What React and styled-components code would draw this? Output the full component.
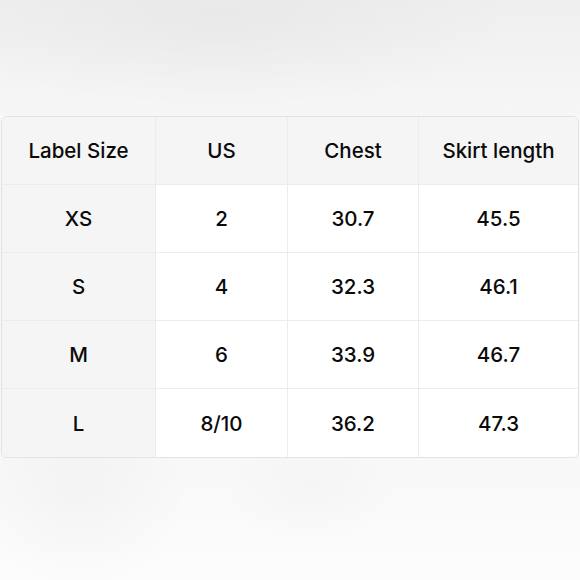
import React from 'react';
import styled, { createGlobalStyle } from 'styled-components';

const GlobalStyle = createGlobalStyle`
  html, body {
    margin: 0;
    padding: 0;
  }
  body {
    font-family: Inter, "Noto Sans", "Liberation Sans", sans-serif;
    color: #111;
  }
`;

const headers = ['Label Size', 'US', 'Chest', 'Skirt length'];

const rows = [
  ['XS', '2', '30.7', '45.5'],
  ['S', '4', '32.3', '46.1'],
  ['M', '6', '33.9', '46.7'],
  ['L', '8/10', '36.2', '47.3'],
];

const App = () => {
  return (
    <Page>
      <GlobalStyle />
      <Top />
      <Table>
        {headers.map((h, i) => (
          <Cell key={h} $shaded $first={i === 0}>
            {h}
          </Cell>
        ))}
        {rows.map((row, r) =>
          row.map((value, c) => (
            <Cell key={`${r}-${c}`} $shaded={c === 0} $first={c === 0} $last={r === rows.length - 1}>
              {value}
            </Cell>
          ))
        )}
      </Table>
      <Bottom />
    </Page>
  );
};

const Page = styled.div`
  width: 580px;
  height: 580px;
  display: flex;
  flex-direction: column;
  overflow: hidden;
  background: #f9f9f9;
`;

const Top = styled.div`
  height: 116px;
  flex-shrink: 0;
  background:
    radial-gradient(ellipse 300px 90px at 220px 20px, rgba(0, 0, 0, 0.03), transparent),
    linear-gradient(180deg, #efefef 0%, #f6f6f6 100%);
`;

const Bottom = styled.div`
  flex: 1;
  background:
    radial-gradient(circle 110px at 80px 30px, rgba(0, 0, 0, 0.025), transparent),
    radial-gradient(ellipse 90px 60px at 310px 30px, rgba(0, 0, 0, 0.015), transparent),
    linear-gradient(180deg, #f8f8f8 0%, #fcfcfc 100%);
`;

const Table = styled.div`
  margin: 0 1px;
  display: grid;
  grid-template-columns: 153px 132px 131px 1fr;
  grid-auto-rows: 68px;
  border: 1px solid #e3e3e3;
  border-radius: 6px;
  overflow: hidden;
  background: #fff;
  box-shadow: 0 1px 2px rgba(0, 0, 0, 0.04);
`;

const Cell = styled.div`
  display: flex;
  align-items: center;
  justify-content: center;
  font-size: 20.5px;
  font-weight: 550;
  letter-spacing: 0;
  color: #0a0a0a;
  background: ${(p) => (p.$shaded ? '#f5f5f5' : '#ffffff')};
  border-left: ${(p) => (p.$first ? 'none' : '1px solid #ececec')};
  border-bottom: ${(p) => (p.$last ? 'none' : '1px solid #ececec')};
`;

export default App;
